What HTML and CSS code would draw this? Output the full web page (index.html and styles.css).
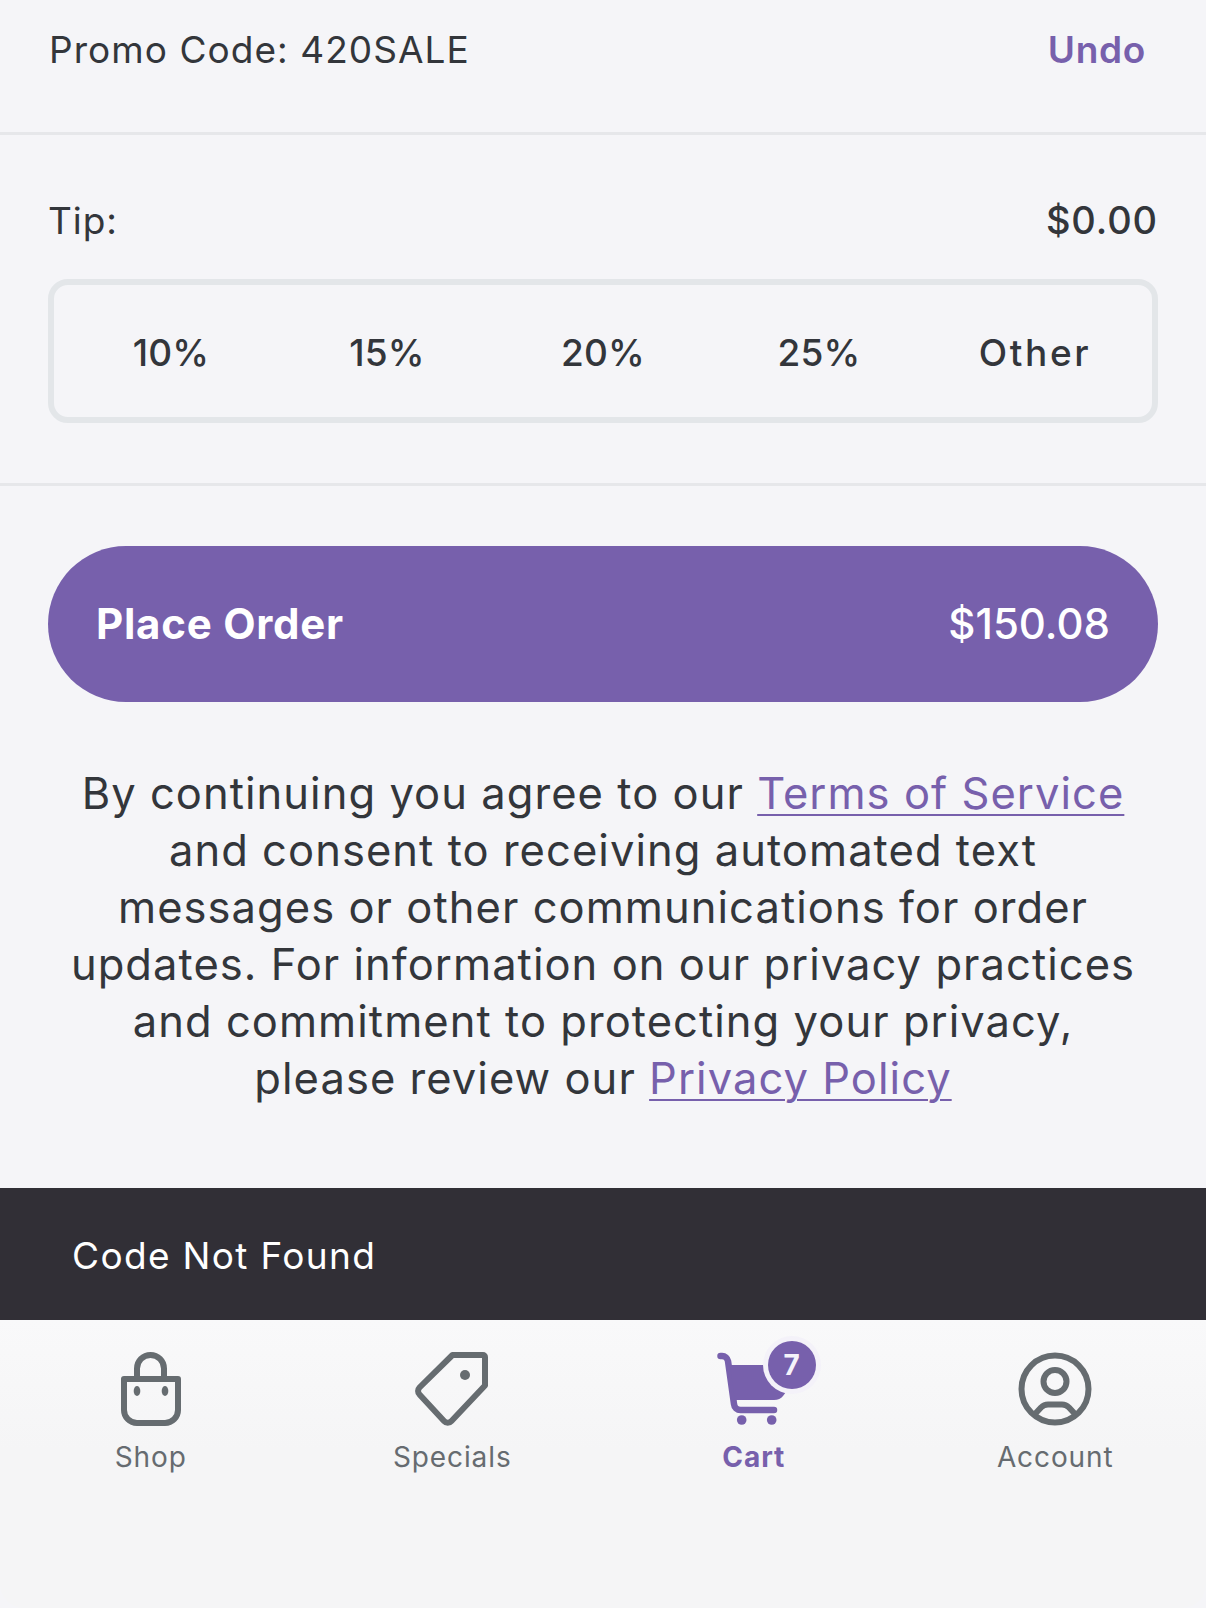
FILE: index.html
```html
<!DOCTYPE html>
<html lang="en">
<head>
<meta charset="utf-8">
<title>Checkout</title>
<link rel="stylesheet" href="styles.css">
</head>
<body>
<div class="page">
  <main class="content">
    <section class="promo">
      <span class="promo-label">Promo Code: 420SALE</span>
      <a class="undo" href="#">Undo</a>
    </section>
    <section class="tip">
      <div class="tip-head">
        <span class="tip-label">Tip:</span>
        <span class="tip-value">$0.00</span>
      </div>
      <div class="tip-options">
        <span class="tip-option">10%</span>
        <span class="tip-option">15%</span>
        <span class="tip-option">20%</span>
        <span class="tip-option">25%</span>
        <span class="tip-option">Other</span>
      </div>
    </section>
    <section class="order">
      <button class="place-order"><span class="place-label">Place Order</span><span class="place-total">$150.08</span></button>
      <p class="legal">By continuing you agree to our <a href="#">Terms of Service</a><br>and consent to receiving automated text<br>messages or other communications for order<br>updates. For information on our privacy practices<br>and commitment to protecting your privacy,<br>please review our <a href="#">Privacy Policy</a></p>
    </section>
  </main>
  <div class="toast">Code Not Found</div>
  <nav class="tabbar">
    <a class="tab" href="#">
      <svg class="tab-icon" viewBox="0 0 74 74" width="74" height="74">
        <path class="stroke" d="M10 27H64V58a13 13 0 0 1-13 13H23a13 13 0 0 1-13-13Z"/>
        <path class="stroke" d="M23 27V16.5a13.5 13.5 0 0 1 27 0V27"/>
        <ellipse class="fill" cx="23" cy="39" rx="3.3" ry="5"/>
        <ellipse class="fill" cx="51" cy="39" rx="3.3" ry="5"/>
      </svg>
      <span class="tab-label">Shop</span>
    </a>
    <a class="tab" href="#">
      <svg class="tab-icon" viewBox="0 0 74 74" width="74" height="74">
        <path class="stroke" d="M37.5 3H68a2 2 0 0 1 2 2V33.5L36.5 69a5 5 0 0 1-7.5 0L4.5 42.5a5 5 0 0 1 0-7Z"/>
        <circle class="fill" cx="50" cy="23" r="5"/>
      </svg>
      <span class="tab-label">Specials</span>
    </a>
    <a class="tab tab-active" href="#">
      <span class="cart-wrap">
        <svg class="tab-icon" viewBox="0 0 74 74" width="74" height="74">
          <path class="cart-line" d="M3.5 4H5a6 6 0 0 1 6 5L17 52a6.500 6.500 0 0 0 6.500 6H57"/>
          <path class="cart-fill" d="M13 13H72V36L66 44Q63 48 57 48H18Z"/>
          <circle class="cart-fill" cx="24.700" cy="68" r="4.800"/>
          <circle class="cart-fill" cx="54.700" cy="68" r="4.800"/>
        </svg>
        <span class="badge">7</span>
      </span>
      <span class="tab-label">Cart</span>
    </a>
    <a class="tab" href="#">
      <svg class="tab-icon" viewBox="0 0 74 74" width="74" height="74">
        <circle class="stroke" cx="37" cy="37" r="33.5"/>
        <circle class="stroke" cx="37" cy="29.5" r="11.5"/>
        <path class="stroke" d="M17 62L23 55.500Q26 52.500 30 52.500H44Q48 52.500 51 55.500L57 62"/>
      </svg>
      <span class="tab-label">Account</span>
    </a>
  </nav>
</div>
</body>
</html>
```
FILE: styles.css
```css
* { box-sizing: border-box; }
html, body { margin: 0; padding: 0; }
body { background: #f5f5f8; font-family: Inter, "Noto Sans", sans-serif; color: #33363b; }
a { color: inherit; }
.page { width: 1206px; height: 1608px; display: flex; flex-direction: column; overflow: hidden; }
.content { height: 1188px; }
.promo { height: 135px; padding: 28px 60px 0 49px; border-bottom: 3px solid #e6e7ea; display: flex; justify-content: space-between; align-items: flex-start; font-size: 37px; line-height: 44px; letter-spacing: 1.05px; }
.undo { color: #7760ac; font-weight: 600; text-decoration: none; letter-spacing: 0.7px; }
.tip { height: 351px; padding: 0 48px; border-bottom: 3px solid #e6e7ea; }
.tip-head { display: flex; justify-content: space-between; align-items: center; height: 144px; padding-top: 26px; font-size: 37px; letter-spacing: 0.9px; }
.tip-value { font-weight: 500; font-size: 38px; }
.tip-options { height: 144px; padding: 0 9px; border: 6px solid #e3e6e9; border-radius: 20px; display: flex; align-items: center; }
.tip-option { flex: 1; text-align: center; font-size: 37px; font-weight: 500; letter-spacing: 0.2px; padding-top: 2px; }
.tip-option:last-child { letter-spacing: 2.600px; }
.order { padding: 60px 48px 0; }
.place-order { width: 1110px; height: 156px; border: 0; border-radius: 78px; background: #7760ac; color: #fff; display: flex; justify-content: space-between; align-items: center; padding: 0 48px 2px; font-family: inherit; font-size: 42px; }
.place-label { font-weight: 700; letter-spacing: 0.75px; }
.place-total { font-weight: 500; }
.legal { margin: 63px -20px 0; text-align: center; font-size: 43.500px; line-height: 57px; letter-spacing: 1.05px; }
.legal a { color: #7760ac; text-underline-offset: 5px; text-decoration-thickness: 2px; }
.toast { height: 132px; background: #312f36; color: #fff; display: flex; align-items: center; padding: 2px 0 0 72px; font-size: 37px; letter-spacing: 1.35px; }
.tabbar { flex: 1; display: grid; grid-template-columns: repeat(4, 1fr); align-items: start; padding-top: 32px; background: linear-gradient(#f9f9fa, #f5f5f6 45%); border-radius: 0 0 24px 24px; }
.tab { display: flex; flex-direction: column; align-items: center; text-decoration: none; color: #666b70; }
.tab-icon { display: block; }
.tab-label { margin-top: 13px; font-size: 28px; line-height: 36px; letter-spacing: 0.9px; }
.tab-active { color: #7760ac; }
.tab-active .tab-label { font-weight: 700; }
.stroke { fill: none; stroke: #666c70; stroke-width: 6; stroke-linejoin: round; }
.fill { fill: #666c70; }
.cart-line { fill: none; stroke: #7760ac; stroke-width: 6.500; stroke-linecap: round; }
.cart-fill { fill: #7760ac; }
.cart-wrap { position: relative; display: block; }
.badge { position: absolute; left: 51px; top: -11px; width: 48px; height: 48px; border-radius: 50%; background: #7760ac; color: #f5f3fa; box-shadow: 0 0 0 5px #f4f2f9; display: flex; align-items: center; justify-content: center; font-size: 28px; font-weight: 700; letter-spacing: 0; }
```
